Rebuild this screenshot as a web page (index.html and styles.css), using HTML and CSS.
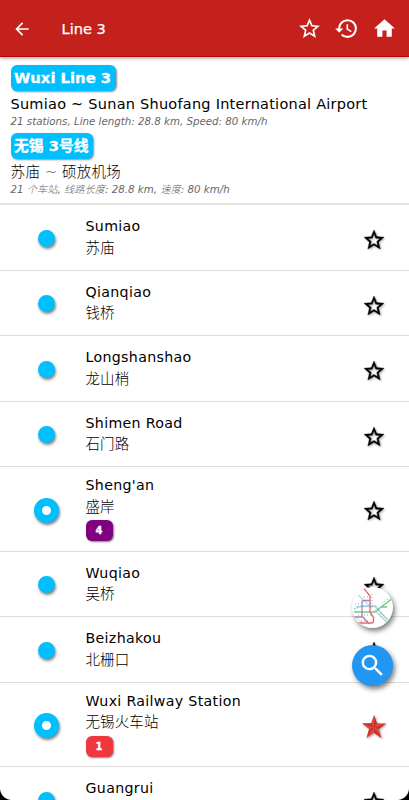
FILE: index.html
```html
<!DOCTYPE html>
<html lang="en">
<head>
<meta charset="utf-8">
<title>Line 3</title>
<link rel="stylesheet" href="styles.css">
</head>
<body>
<svg class="defs" width="0" height="0">
  <symbol id="star" viewBox="0 0 24 24"><path d="M22 9.24l-7.19-.62L12 2 9.19 8.63 2 9.24l5.46 4.73L5.82 21 12 17.27 18.18 21l-1.63-7.03L22 9.24zM12 15.4l-3.76 2.27 1-4.28-3.32-2.88 4.38-.38L12 6.1l1.71 4.04 4.38.38-3.32 2.88 1 4.28L12 15.4z"/></symbol>
</svg>
<div class="app">
  <header class="bar">
    <svg class="back" viewBox="0 0 24 24"><path d="M20 11H7.83l5.59-5.59L12 4l-8 8 8 8 1.41-1.41L7.83 13H20v-2z"/></svg>
    <h1 class="title">Line 3</h1>
    <svg class="action" viewBox="0 0 24 24"><use href="#star"/></svg>
    <svg class="action history" viewBox="0 0 24 24"><path d="M13 3a9 9 0 0 0-9 9H1l3.89 3.89.07.14L9 12H6c0-3.87 3.13-7 7-7s7 3.13 7 7-3.13 7-7 7c-1.93 0-3.68-.79-4.94-2.06l-1.42 1.42A8.95 8.95 0 0 0 13 21a9 9 0 0 0 0-18zm-1 5v5l4.28 2.54.72-1.21-3.5-2.08V8H12z"/></svg>
    <svg class="action home" viewBox="0 0 24 24"><path d="M10 20v-6h4v6h5v-8h3L12 3 2 12h3v8z"/></svg>
  </header>

  <section class="info">
    <div class="line-tag">Wuxi Line 3</div>
    <p class="route">Sumiao ~ Sunan Shuofang International Airport</p>
    <p class="facts">21 stations, Line length: 28.8 km, Speed: 80 km/h</p>
    <div class="line-tag zh-tag">无锡 3号线</div>
    <p class="route zh-route">苏庙 ~ 硕放机场</p>
    <p class="facts zh-facts">21 个车站, 线路长度: 28.8 km, 速度: 80 km/h</p>
  </section>

  <ul class="stations">
    <li class="station"><span class="mark"><i class="dot"></i></span><div class="names"><span class="en">Sumiao</span><span class="zh">苏庙</span></div><svg class="fav" viewBox="0 0 24 24"><use href="#star"/></svg></li>
    <li class="station"><span class="mark"><i class="dot"></i></span><div class="names"><span class="en">Qianqiao</span><span class="zh">钱桥</span></div><svg class="fav" viewBox="0 0 24 24"><use href="#star"/></svg></li>
    <li class="station"><span class="mark"><i class="dot"></i></span><div class="names"><span class="en">Longshanshao</span><span class="zh">龙山梢</span></div><svg class="fav" viewBox="0 0 24 24"><use href="#star"/></svg></li>
    <li class="station"><span class="mark"><i class="dot"></i></span><div class="names"><span class="en">Shimen Road</span><span class="zh">石门路</span></div><svg class="fav" viewBox="0 0 24 24"><use href="#star"/></svg></li>
    <li class="station transfer"><span class="mark"><i class="ring"></i></span><div class="names"><span class="en">Sheng'an</span><span class="zh">盛岸</span><b class="badge purple">4</b></div><svg class="fav" viewBox="0 0 24 24"><use href="#star"/></svg></li>
    <li class="station"><span class="mark"><i class="dot"></i></span><div class="names"><span class="en">Wuqiao</span><span class="zh">吴桥</span></div><svg class="fav" viewBox="0 0 24 24"><use href="#star"/></svg></li>
    <li class="station"><span class="mark"><i class="dot"></i></span><div class="names"><span class="en">Beizhakou</span><span class="zh">北栅口</span></div><svg class="fav" viewBox="0 0 24 24"><use href="#star"/></svg></li>
    <li class="station transfer"><span class="mark"><i class="ring"></i></span><div class="names"><span class="en">Wuxi Railway Station</span><span class="zh">无锡火车站</span><b class="badge red">1</b></div>
      <svg class="fav saved" viewBox="0 0 24 24">
        <path fill="#e5453a" d="M12 0l2.9 8.3 9.1.2-7.2 5.5 2.6 9L12 17.8 4.6 23l2.6-9L0 8.5l9.1-.2z"/>
        <path fill="#c2352c" d="M12 0l2.9 8.3L12 12.5zM24 8.5L16.8 14 12 12.5zM19.4 23L12 17.8v-5.3zM4.6 23l2.6-9 4.8-1.5zM0 8.5l9.1-.2 2.9 4.2z"/>
      </svg></li>
    <li class="station"><span class="mark"><i class="dot"></i></span><div class="names"><span class="en">Guangrui</span></div><svg class="fav" viewBox="0 0 24 24"><use href="#star"/></svg></li>
  </ul>

  <div class="fabs">
    <div class="fab map">
      <svg viewBox="0 0 40 40" fill="none">
        <path stroke="#b4dde8" stroke-width="1.4" d="M3 18.500h20l4 5.500 10 10M21 22l15 14M5 7l14 13"/>
        <path stroke="#b4dde8" stroke-width="1" d="M2 28l9 9"/>
        <path stroke="#86c3dc" stroke-width="1.300" stroke-dasharray="2 1" d="M1 21l8-3h13l6 7 6 6"/>
        <path stroke="#74c78b" stroke-width="1.400" d="M1 24h21l6-5 12-9M28 19h6"/>
        <path stroke="#b07fb8" stroke-width="1.300" d="M17 12.500h-6q-2 0-2 2V28l7 8M1 29h8"/>
        <path stroke="#e66d6d" stroke-width="1.400" d="M10.500 0L17 8v16l3.500 5.500V33q0 2-2 2H5"/>
        <path stroke="#777" stroke-width=".7" stroke-dasharray="1 2" d="M19 6v10M2 16h5M5 27h13M8 33h8M29 15l8-5M26 26l8 9M11 9h4"/>
      </svg>
    </div>
    <div class="fab search">
      <svg viewBox="0 0 24 24"><path d="M15.500 14h-.79l-.28-.27A6.470 6.470 0 0 0 16 9.500 6.500 6.500 0 1 0 9.500 16c1.610 0 3.090-.59 4.230-1.570l.27.28v.79l5 4.990L20.490 19l-4.990-5zm-6 0a4.500 4.500 0 1 1 0-9 4.500 4.500 0 0 1 0 9z"/></svg>
    </div>
  </div>
  <i class="corner left"></i><i class="corner right"></i>
</div>
</body>
</html>
```
FILE: styles.css
```css
* { box-sizing: border-box; }
body { margin: 0; background: #fff; color: #000; font-family: "DejaVu Sans", "Noto Sans CJK SC", sans-serif; }
.defs { position: absolute; }
.app { position: relative; height: 800px; overflow: hidden; }

.bar { display: flex; align-items: center; height: 57px; padding: 0 12px; background: #c4211c; border-bottom: 1px solid #b80500; box-shadow: 0 1px 4px rgba(0,0,0,.4); color: #fff; }
.bar svg { fill: #fff; flex: none; }
.back { width: 20px; height: 20px; margin-top: 2px; }
.title { flex: 1; margin: 2px 0 0 29.5px; font-size: 14.6px; font-weight: 400; line-height: 20px; -webkit-text-stroke: .25px #fff; }
.action { width: 25px; height: 25px; margin-top: 1px; }
.history { margin-left: 12px; }
.home { margin-left: 13px; }

.info { height: 148px; padding: 8px 10px 0 10.5px; border-bottom: 2px solid #e4e4e4; white-space: nowrap; }
.line-tag { width: 105.5px; height: 26px; padding-left: 3.5px; background: #00bfff; border-radius: 6px; box-shadow: 1px 1px 2px rgba(0,0,0,.45); color: #fff; font-size: 14.8px; font-weight: 700; line-height: 26px; -webkit-text-stroke: .3px #fff; }
.zh-tag { width: 82.5px; margin-top: 5px; }
.route { margin: 3px 0 0; font-size: 14.5px; letter-spacing: .24px; line-height: 20px; }
.facts { margin: 0; color: #666; font-size: 10.25px; font-style: italic; line-height: 14px; }
.zh-route, .zh-facts { font-weight: 300; }

.stations { margin: 0; padding: 0; list-style: none; }
.station { display: flex; height: 65.5px; padding: 11px 23px 0 0; border-bottom: 1px solid #ddd; }
.transfer { height: 84.5px; padding-top: 8px; }
.mark { display: flex; flex: none; align-items: center; justify-content: center; width: 93px; height: 44px; }
.transfer .mark { height: 70px; }
.dot { width: 17px; height: 17px; background: #00bfff; border-radius: 50%; box-shadow: 1px 2px 3px rgba(0,0,0,.5); }
.ring { width: 25px; height: 25px; background: #fff; border: 8px solid #00bfff; border-radius: 50%; box-shadow: 1px 2px 3px rgba(0,0,0,.5); }
.names { display: flex; flex: 1; flex-direction: column; align-items: flex-start; margin-left: -7.5px; font-size: 14.2px; letter-spacing: .32px; line-height: 21.5px; }
.zh { font-weight: 300; font-size: 14.5px; letter-spacing: .1px; }
.badge { width: 27px; height: 21px; margin-top: 2px; border-radius: 6px; box-shadow: 1px 1px 2px rgba(0,0,0,.5); color: #fff; font-size: 10px; letter-spacing: 0; line-height: 21px; text-align: center; -webkit-text-stroke: .3px #fff; }
.purple { background: purple; }
.red { background: #ee373e; }
.fav { width: 24px; height: 24px; margin-top: 12px; flex: none; stroke: #000; stroke-width: .4px; filter: drop-shadow(1px 1px 1px rgba(0,0,0,.35)); }
.transfer .fav { margin-top: 24px; }
.saved { stroke: none; }

.fabs { position: absolute; top: 587px; left: 352px; display: flex; flex-direction: column; gap: 17px; }
.fab { display: flex; align-items: center; justify-content: center; width: 41px; height: 41px; border-radius: 50%; box-shadow: 2px 3px 5px rgba(0,0,0,.5); overflow: hidden; }
.map { background: #fff; }
.map svg { width: 40px; height: 40px; }
.search { background: #2196f3; }
.search svg { width: 29px; height: 29px; fill: #fff; }
.corner { position: absolute; bottom: 0; width: 12px; height: 12px; }
.left { left: 0; background: radial-gradient(circle at 100% 0, transparent 11.5px, #000 12.5px); }
.right { right: 0; background: radial-gradient(circle at 0 0, transparent 11.5px, #000 12.5px); }
```
